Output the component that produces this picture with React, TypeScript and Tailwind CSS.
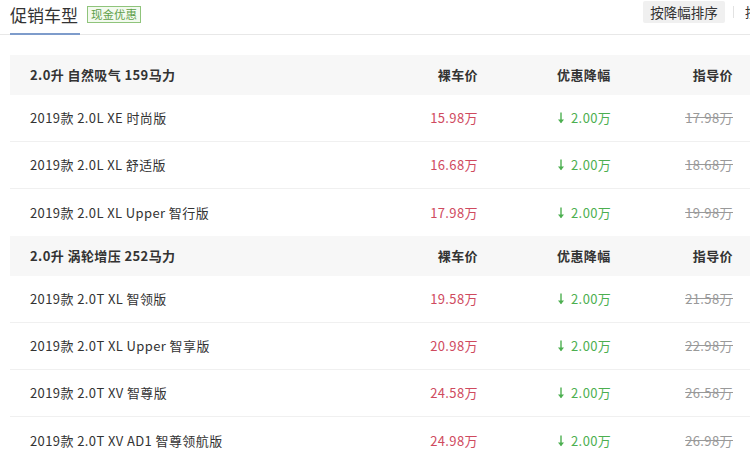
import React from 'react';

type Row = { name: string; price: string; cut: string; guide: string };
type Group = { title: string; rows: Row[] };

const groups: Group[] = [
  {
    title: '2.0升 自然吸气 159马力',
    rows: [
      { name: '2019款 2.0L XE 时尚版', price: '15.98万', cut: '2.00万', guide: '17.98万' },
      { name: '2019款 2.0L XL 舒适版', price: '16.68万', cut: '2.00万', guide: '18.68万' },
      { name: '2019款 2.0L XL Upper 智行版', price: '17.98万', cut: '2.00万', guide: '19.98万' },
    ],
  },
  {
    title: '2.0升 涡轮增压 252马力',
    rows: [
      { name: '2019款 2.0T XL 智领版', price: '19.58万', cut: '2.00万', guide: '21.58万' },
      { name: '2019款 2.0T XL Upper 智享版', price: '20.98万', cut: '2.00万', guide: '22.98万' },
      { name: '2019款 2.0T XV 智尊版', price: '24.58万', cut: '2.00万', guide: '26.58万' },
      { name: '2019款 2.0T XV AD1 智尊领航版', price: '24.98万', cut: '2.00万', guide: '26.98万' },
    ],
  },
];

function DownArrow() {
  return (
    <svg className="w-[8px] h-[12px] mr-[6px]" viewBox="0 0 8 12" fill="none">
      <path d="M4 0.5v10" stroke="#4caf50" strokeWidth="1.4" />
      <path d="M1 7.5L4 11.2 7 7.5z" fill="#4caf50" />
    </svg>
  );
}

export default function App() {
  return (
    <div
      className="w-[750px] h-[461px] overflow-hidden bg-white text-[#333]"
      style={{ fontFamily: '"Noto Sans CJK SC", "Noto Sans", sans-serif' }}
    >
      {/* Header */}
      <div className="relative flex items-center h-[35px] border-b border-[#e8e8e8] pl-[10px]">
        <div className="relative h-full flex items-center">
          <span className="text-[17px] leading-none text-[#333] -mt-[5px]">促销车型</span>
          <span className="absolute left-0 right-[-2px] bottom-[-1px] h-[2px] bg-[#7e9ccb]" />
        </div>
        <span className="ml-[9px] -mt-[5px] border border-[#8fc47b] bg-[#f3faef] text-[#5fa04a] text-[11.5px] leading-none px-[3px] py-[2px]">
          现金优惠
        </span>
        <div className="ml-auto flex items-center -mt-[10px] mr-[-2px]">
          <span className="bg-[#f0f0f0] rounded-[2px] text-[13.5px] text-[#333] h-[22px] w-[82px] flex items-center justify-center">
            按降幅排序
          </span>
          <span className="w-px h-[12px] bg-[#e2e2e2] ml-[8px]" />
          <span className="ml-[11px] text-[13px] text-[#333] w-[7px] overflow-hidden whitespace-nowrap">按</span>
        </div>
      </div>

      {/* Table */}
      <div className="mt-[20px] ml-[10px] w-[750px] tracking-[0.4px]">
        {groups.map((g) => (
          <div key={g.title}>
            <div className="flex items-center h-[40px] bg-[#f7f7f7] pl-[20px] pr-[27px] text-[13px] font-semibold text-[#333]">
              <div className="flex-1">{g.title}</div>
              <div className="w-[100px] text-right">裸车价</div>
              <div className="ml-[79px] w-[100px]">优惠降幅</div>
              <div className="w-[76px] text-right">指导价</div>
            </div>
            {g.rows.map((r, i) => (
              <div
                key={r.name}
                className={`flex items-center h-[47px] pl-[20px] pr-[27px] text-[13px] ${
                  i < g.rows.length - 1 ? 'border-b border-[#f0f0f0]' : ''
                }`}
              >
                <div className="flex-1 text-[#333]">{r.name}</div>
                <div className="w-[100px] text-right text-[#cf4a5e]">{r.price}</div>
                <div className="ml-[79px] w-[100px] flex items-center text-[#4caf50]">
                  <DownArrow />
                  {r.cut}
                </div>
                <div className="w-[76px] text-right text-[#999] line-through">{r.guide}</div>
              </div>
            ))}
          </div>
        ))}
      </div>
    </div>
  );
}
